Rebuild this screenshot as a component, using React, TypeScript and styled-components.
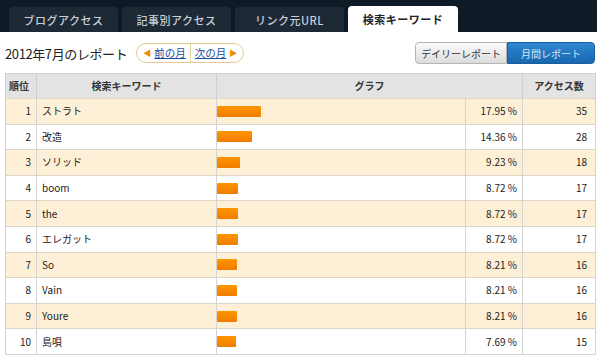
import styled, { createGlobalStyle } from "styled-components";

const GlobalStyle = createGlobalStyle`
  html, body {
    margin: 0;
    padding: 0;
    background: #fff;
  }
  body {
    font-family: "Noto Sans CJK JP", "Noto Sans", sans-serif;
    color: #222;
  }
`;

const Page = styled.div`
  width: 600px;
  height: 360px;
  overflow: hidden;
`;

const TabBar = styled.div`
  display: flex;
  align-items: flex-end;
  column-gap: 4px;
  height: 32px;
  width: 597px;
  padding-left: 9px;
  box-sizing: border-box;
  background-color: #0e1a26;
`;

const Tab = styled.div<{ active?: boolean }>`
  display: flex;
  align-items: center;
  justify-content: center;
  width: ${(props) => (props.active ? 110 : 109)}px;
  height: ${(props) => (props.active ? 26 : 25)}px;
  border-radius: 4px 4px 0 0;
  background-color: ${(props) => (props.active ? "#fff" : "#1d2935")};
  color: ${(props) => (props.active ? "#222" : "#c9d0d8")};
  font-size: 11px;
  font-weight: ${(props) => (props.active ? 700 : 500)};
  letter-spacing: 0.5px;
`;

const TitleRow = styled.div`
  display: flex;
  align-items: center;
  justify-content: space-between;
  height: 22px;
  margin-top: 10px;
  padding: 0 5px 0 5px;
`;

const Row = styled.div<{ colGap?: number }>`
  display: flex;
  align-items: center;
  column-gap: ${(props) => props.colGap || 0}px;
`;

const Title = styled.span`
  font-size: 13px;
  color: #222;
  letter-spacing: -0.4px;
`;

const MonthNav = styled.div`
  display: flex;
  align-items: center;
  height: 18px;
  padding: 0 6px;
  border: 1px solid #e6c990;
  border-radius: 10px;
  background: #fff;
  font-size: 10.5px;
  line-height: 1;
  margin-left: 9px;
`;

const NavLink = styled.a`
  color: #1b4a9b;
  text-decoration: underline;
  padding: 0 3px;
`;

const Arrow = styled.span`
  color: #f08a00;
  font-size: 8px;
`;

const NavSep = styled.span`
  width: 1px;
  height: 18px;
  background: #e6d2a8;
  margin: 0 1px;
`;

const Toggle = styled.div`
  display: flex;
  height: 22px;
`;

const ToggleButton = styled.div<{ active?: boolean; width: number }>`
  display: flex;
  align-items: center;
  justify-content: center;
  width: ${(props) => props.width}px;
  box-sizing: border-box;
  font-size: 10px;
  border: 1px solid ${(props) => (props.active ? "#1b5d9c" : "#b5b5b5")};
  border-radius: ${(props) => (props.active ? "0 4px 4px 0" : "4px 0 0 4px")};
  background: ${(props) =>
    props.active
      ? "linear-gradient(#2f86cf, #1767b1)"
      : "linear-gradient(#fbfbfb, #dcdcdc)"};
  color: ${(props) => (props.active ? "#d6e8f8" : "#333")};
`;

const Table = styled.table`
  margin: 9px 0 0 5px;
  width: 590px;
  border-collapse: collapse;
  table-layout: fixed;
  font-size: 10px;
  line-height: 12px;
  border: 1px solid #d2d2d2;
`;

const HeadCell = styled.th<{ align?: string }>`
  height: 24px;
  padding: 0 3px;
  background-color: #e3e3e3;
  border-left: 1px solid #cfcfcf;
  font-weight: 700;
  color: #333;
  white-space: nowrap;
  text-align: ${(props) => props.align || "center"};
`;

const BodyRow = styled.tr<{ odd?: boolean }>`
  background-color: ${(props) => (props.odd ? "#fdf0d6" : "#fff")};
  border-top: 1px solid #dcd6c8;
`;

const Cell = styled.td<{ align?: string; pad?: number; line?: boolean }>`
  height: 24.6px;
  padding: 0 ${(props) => props.pad ?? 5}px 0 5px;
  text-align: ${(props) => props.align || "left"};
  border-left: ${(props) => (props.line === false ? "none" : "1px solid #d4d4d4")};
  color: #222;
  white-space: nowrap;
`;

const BarCell = styled.td`
  padding: 0;
  border-left: 1px solid #d4d4d4;
`;

const Bar = styled.div`
  height: 11px;
  background: linear-gradient(#ff9500, #f07c00);
  border-radius: 1px;
`;

const rows = [
  { keyword: "ストラト", pct: 17.95, count: 35 },
  { keyword: "改造", pct: 14.36, count: 28 },
  { keyword: "ソリッド", pct: 9.23, count: 18 },
  { keyword: "boom", pct: 8.72, count: 17 },
  { keyword: "the", pct: 8.72, count: 17 },
  { keyword: "エレガット", pct: 8.72, count: 17 },
  { keyword: "So", pct: 8.21, count: 16 },
  { keyword: "Vain", pct: 8.21, count: 16 },
  { keyword: "Youre", pct: 8.21, count: 16 },
  { keyword: "島唄", pct: 7.69, count: 15 },
];

export default function App() {
  return (
    <Page>
      <GlobalStyle />
      <TabBar>
        <Tab>ブログアクセス</Tab>
        <Tab>記事別アクセス</Tab>
        <Tab>リンク元URL</Tab>
        <Tab active>検索キーワード</Tab>
      </TabBar>

      <TitleRow>
        <Row>
          <Title>2012年7月のレポート</Title>
          <MonthNav>
            <Arrow>◀</Arrow>
            <NavLink>前の月</NavLink>
            <NavSep />
            <NavLink>次の月</NavLink>
            <Arrow>▶</Arrow>
          </MonthNav>
        </Row>
        <Toggle>
          <ToggleButton width={92}>デイリーレポート</ToggleButton>
          <ToggleButton width={88} active>
            月間レポート
          </ToggleButton>
        </Toggle>
      </TitleRow>

      <Table>
        <colgroup>
          <col style={{ width: 31 }} />
          <col style={{ width: 180 }} />
          <col style={{ width: 249 }} />
          <col style={{ width: 57 }} />
          <col style={{ width: 73 }} />
        </colgroup>
        <thead>
          <tr>
            <HeadCell align="left">順位</HeadCell>
            <HeadCell>検索キーワード</HeadCell>
            <HeadCell colSpan={2}>グラフ</HeadCell>
            <HeadCell>アクセス数</HeadCell>
          </tr>
        </thead>
        <tbody>
          {rows.map((r, i) => (
            <BodyRow key={i} odd={i % 2 === 0}>
              <Cell align="right" line={false}>
                {i + 1}
              </Cell>
              <Cell>{r.keyword}</Cell>
              <BarCell>
                <Bar style={{ width: Math.round(r.pct * 2.45) }} />
              </BarCell>
              <Cell align="right">{r.pct.toFixed(2)} %</Cell>
              <Cell align="right" pad={8}>
                {r.count}
              </Cell>
            </BodyRow>
          ))}
        </tbody>
      </Table>
    </Page>
  );
}
